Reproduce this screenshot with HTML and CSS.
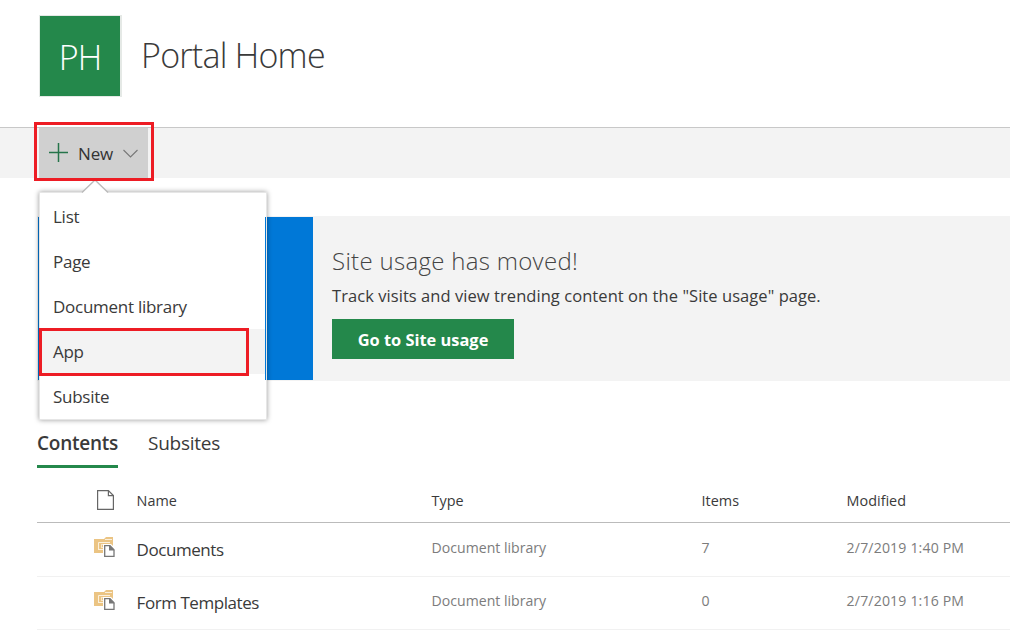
FILE: index.html
```html
<!DOCTYPE html>
<html lang="en">
<head>
<meta charset="utf-8">
<title>Portal Home</title>
<link rel="stylesheet" href="styles.css">
</head>
<body>
<svg class="symbols" aria-hidden="true">
  <symbol id="library" viewBox="0 0 21 21">
    <path fill="#ebc483" d="M0 3h10l2-2h7v16H0z"/>
    <path fill="none" stroke="#fbf0dc" d="M11 3.500h7M4.500 14V6.500H16"/>
    <path fill="none" stroke="#fbf0dc" d="M4 13.500h6"/>
    <path fill="none" stroke="#f8e7ca" d="M7 8.500h7M7 11.500h3M7.500 8v4"/>
    <path fill="#fff" d="M9 8h8l4 4v9H9z"/>
    <path fill="#fff" stroke="#777" stroke-width="1.300" d="M10.700 9.700h5.300l4 4v6.600h-9.300z"/>
    <path fill="#777" d="M15 9l5.600 5.500H15z"/>
  </symbol>
</svg>
<header class="site-header">
  <div class="logo"><span>PH</span></div>
  <h1 class="site-title">Portal Home</h1>
</header>
<nav class="command-bar">
  <div class="new-wrap">
    <button class="new-button">
      <svg class="plus" width="19" height="19" viewBox="0 0 19 19"><path d="M9.500 0v19M0 9.500h19" stroke="#25744a" stroke-width="1.500" fill="none"/></svg>
      <span class="new-label">New</span>
      <svg class="chevron" width="15" height="9" viewBox="0 0 15 9"><path d="M.5 1l7 7 7-7" stroke="#777" stroke-width="1.100" fill="none"/></svg>
    </button>
    <div class="mark mark-new"></div>
    <div class="menu">
      <svg class="beak" width="28" height="14" viewBox="0 0 28 14"><path d="M0 14L14 0l14 14z" fill="#fff"/><path d="M1 12.500L14 0l13 12.500" fill="none" stroke="#bbb" stroke-width="1.400"/></svg>
      <a class="menu-item">List</a>
      <a class="menu-item">Page</a>
      <a class="menu-item">Document library</a>
      <a class="menu-item app">App<span class="mark mark-app"></span></a>
      <a class="menu-item">Subsite</a>
    </div>
  </div>
</nav>
<main class="content">
  <section class="banner">
    <div class="banner-art"></div>
    <div class="banner-body">
      <h2 class="banner-title">Site usage has moved!</h2>
      <p class="banner-text">Track visits and view trending content on the "Site usage" page.</p>
      <button class="usage-button">Go to Site usage</button>
    </div>
  </section>
  <div class="tabs">
    <a class="tab active">Contents</a>
    <a class="tab">Subsites</a>
  </div>
  <div class="table">
    <div class="row head">
      <svg class="file" width="17" height="20" viewBox="0 0 17 20"><path d="M.6.600h10.800l5 5v13.800H.6zM11.400.600v5h5" fill="none" stroke="#666" stroke-width="1.200"/></svg>
      <span>Name</span><span>Type</span><span>Items</span><span>Modified</span>
    </div>
    <div class="row">
      <svg class="lib" width="21" height="21"><use href="#library"/></svg>
      <span class="name">Documents</span><span class="meta">Document library</span><span class="meta">7</span><span class="meta date">2/7/2019 1:40 PM</span>
    </div>
    <div class="row">
      <svg class="lib" width="21" height="21"><use href="#library"/></svg>
      <span class="name">Form Templates</span><span class="meta">Document library</span><span class="meta">0</span><span class="meta date">2/7/2019 1:16 PM</span>
    </div>
  </div>
</main>
</body>
</html>
```
FILE: styles.css
```css
* { box-sizing: border-box; }
body { margin: 0; height: 633px; overflow: hidden; background: #fff; color: #3a3a3a; font-family: "Open Sans", "Noto Sans", sans-serif; }
h1, h2, p { margin: 0; }
button { border: 0; padding: 0; font-family: inherit; }
svg { display: block; flex: none; }
.symbols { position: absolute; width: 0; height: 0; }
.site-header { height: 127px; padding: 15px 0 0 39px; display: flex; align-items: flex-start; gap: 20px; }
.logo { width: 83px; height: 82px; padding-top: 2px; border: 1px solid #e5e9e6; border-right-width: 2px; background: #24884b; background-clip: padding-box; color: #fff; display: flex; align-items: center; justify-content: center; font-size: 34px; font-weight: 300; letter-spacing: -0.8px; }
.site-title { margin-left: -1px; font-size: 34px; line-height: 81px; font-weight: 300; letter-spacing: -0.75px; white-space: nowrap; }
.command-bar { height: 51px; border-top: 1px solid #c8c8c8; background: #f3f3f3; padding-left: 39px; display: flex; }
.new-wrap { position: relative; width: 109px; height: 50px; }
.new-button { width: 109px; height: 50px; background: #d0d0d0; display: flex; align-items: center; padding: 0 0 1px 10px; color: #333; font-size: 17px; }
.new-label { margin: 1px 10px 0 10px; width: 35px; letter-spacing: -0.2px; }
.chevron { margin-top: 2px; }
.mark { position: absolute; border: 3px solid #ed1c24; }
.mark-new { left: -5px; top: -6px; width: 120px; height: 59px; z-index: 3; }
.menu { position: absolute; z-index: 2; left: 0; top: 64px; width: 228px; height: 228px; padding-top: 1px; background: #fff; border: 1px solid #e6e6e6; box-shadow: 0 0 5px rgba(0,0,0,.4); }
/* sliver of the banner art visible along the menu's right edge */
.menu::after { content: ""; position: absolute; right: 0; top: 24px; width: 1px; height: 163px; background: #0078d7; }
.beak { position: absolute; left: 41px; top: -13px; }
.menu-item { position: relative; display: block; height: 45px; line-height: 46px; padding-left: 13px; font-size: 17px; letter-spacing: -0.27px; white-space: nowrap; }
.menu-item.app { background: #f3f3f3; margin-right: 1px; }
.mark-app { left: -1px; top: -1px; width: 210px; height: 48px; }
.content { padding: 38px 0 0 37px; }
.banner { height: 165px; background: #f3f3f3; padding: 1px 0 1px 1px; display: flex; }
.banner-art { width: 275px; height: 163px; background: #0078d7; }
.banner-body { padding: 26px 0 0 19px; display: flex; flex-direction: column; align-items: flex-start; }
.banner-title { font-size: 24px; line-height: 36px; font-weight: 300; letter-spacing: 0.3px; color: #444; white-space: nowrap; }
.banner-text { font-size: 16.5px; line-height: 34px; letter-spacing: 0.06px; white-space: nowrap; }
.usage-button { margin-top: 6px; width: 182px; height: 40px; background: #24884b; color: #fff; font-size: 16.4px; font-weight: 700; }
.tabs { height: 87px; padding-top: 44px; display: flex; gap: 30px; }
.tab { height: 43px; line-height: 37px; font-size: 19px; letter-spacing: -0.25px; white-space: nowrap; }
.tab.active { width: 81px; border-bottom: 3px solid #24884b; font-weight: 600; }
.row { height: 53px; border-bottom: 1px solid #f1f1f1; display: grid; grid-template-columns: 99.6px 295px 270px 145px 1fr; align-items: center; white-space: nowrap; font-size: 14.4px; }
.row.head { height: 55px; padding-top: 10px; border-bottom-color: #bbb; }
.row:nth-child(2) { height: 54px; }
.file { margin-left: 60px; }
.lib { margin: -6px 0 0 57px; }
.row:nth-child(3) > * { position: relative; top: -1px; }
.name { font-size: 17px; letter-spacing: -0.45px; }
.meta { color: #7c7c7c; padding-bottom: 4px; font-size: 14.100px; }
.date { letter-spacing: 0.16px; }
```
